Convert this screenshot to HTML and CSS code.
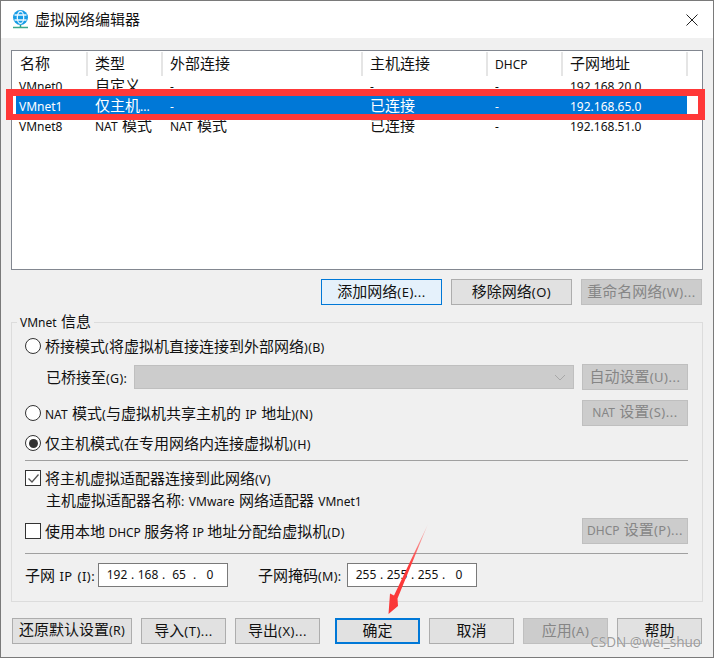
FILE: index.html
```html
<!DOCTYPE html>
<html lang="zh-CN">
<head>
<meta charset="utf-8">
<title>虚拟网络编辑器</title>
<link rel="stylesheet" href="styles.css">
</head>
<body>
<div class="dialog">
  <header class="titlebar">
    <svg class="app-icon" width="18" height="20" viewBox="0 0 18 20">
      <circle cx="8.500" cy="7.500" r="7.500" fill="#169ce6"/>
      <ellipse cx="8.500" cy="7.500" rx="3.200" ry="6" fill="none" stroke="#e8f6ff" stroke-width="1.300"/>
      <path d="M2.500 5h12M2.500 10h12" stroke="#e8f6ff" stroke-width="1.300"/>
      <path d="M8.500 15v2" stroke="#2aa07a" stroke-width="1.500"/>
      <path d="M1 17.500h15" stroke="#3aa88a" stroke-width="1.500"/>
    </svg>
    <span class="title">虚拟网络编辑器</span>
    <svg class="close" width="12" height="12" viewBox="0 0 12 12">
      <path d="M.5.5l11 11M11.500.5l-11 11" stroke="#222" stroke-width="1" fill="none"/>
    </svg>
  </header>

  <main class="client">
    <section class="list">
      <div class="list-head">
        <div class="th">名称</div>
        <div class="th">类型</div>
        <div class="th">外部连接</div>
        <div class="th">主机连接</div>
        <div class="th"><span class="e">DHCP</span></div>
        <div class="th">子网地址</div>
      </div>
      <div class="row">
        <div class="td"><span class="e">VMnet0</span></div>
        <div class="td">自定义</div>
        <div class="td"><span class="e">-</span></div>
        <div class="td"><span class="e">-</span></div>
        <div class="td"><span class="e">-</span></div>
        <div class="td"><span class="e">192.168.20.0</span></div>
      </div>
      <div class="row selected">
        <div class="td"><span class="e">VMnet1</span></div>
        <div class="td">仅主机<span class="e">...</span></div>
        <div class="td"><span class="e">-</span></div>
        <div class="td">已连接</div>
        <div class="td"><span class="e">-</span></div>
        <div class="td"><span class="e">192.168.65.0</span></div>
      </div>
      <div class="row">
        <div class="td"><span class="e">VMnet8</span></div>
        <div class="td"><span class="e">NAT</span> 模式</div>
        <div class="td"><span class="e">NAT</span> 模式</div>
        <div class="td">已连接</div>
        <div class="td"><span class="e">-</span></div>
        <div class="td"><span class="e">192.168.51.0</span></div>
      </div>
    </section>

    <div class="list-actions">
      <button class="btn wide focus">添加网络<span class="e d">(E)...</span></button>
      <button class="btn wide">移除网络<span class="e d">(O)</span></button>
      <button class="btn wide disabled">重命名网络<span class="e d">(W)...</span></button>
    </div>

    <section class="group">
      <div class="legend"><span class="e">VMnet</span> 信息</div>

      <div class="line first">
        <span class="radio"></span>
        <span class="lbl">桥接模式<span class="e p">(</span>将虚拟机直接连接到外部网络<span class="e p">)(B)</span></span>
      </div>
      <div class="line bridge">
        <span class="bridge-label lbl">已桥接至<span class="e p">(G):</span></span>
        <div class="select">
          <svg width="12" height="7" viewBox="0 0 12 7"><path d="M1 1l5 5 5-5" fill="none" stroke="#a8a8a8" stroke-width="1"/></svg>
        </div>
        <button class="btn side disabled">自动设置<span class="e d">(U)...</span></button>
      </div>
      <div class="line spread nat">
        <span class="opt">
          <span class="radio"></span>
          <span class="lbl"><span class="e">NAT</span> 模式<span class="e p">(</span>与虚拟机共享主机的 <span class="e">IP</span> 地址<span class="e p">)(N)</span></span>
        </span>
        <button class="btn side disabled"><span class="e">NAT</span> 设置<span class="e d">(S)...</span></button>
      </div>
      <div class="line host">
        <span class="radio checked"></span>
        <span class="lbl">仅主机模式<span class="e p">(</span>在专用网络内连接虚拟机<span class="e p">)(H)</span></span>
      </div>

      <div class="sep sep-a"></div>

      <div class="line check-line">
        <span class="check">
          <svg width="13" height="11" viewBox="0 0 13 11"><path d="M1.500 5.500l3.500 3.500 6.500-7.500" fill="none" stroke="#555" stroke-width="1.300"/></svg>
        </span>
        <span class="lbl">将主机虚拟适配器连接到此网络<span class="e p">(V)</span></span>
      </div>
      <div class="adapter">主机虚拟适配器名称<span class="e p">:</span><span class="e"> VMware</span> 网络适配器 <span class="e">VMnet1</span></div>
      <div class="line spread dhcp">
        <span class="opt">
          <span class="check"></span>
          <span class="lbl tight">使用本地 <span class="e">DHCP</span> 服务将 <span class="e">IP</span> 地址分配给虚拟机<span class="e p">(D)</span></span>
        </span>
        <button class="btn side disabled"><span class="e">DHCP</span> 设置<span class="e d">(P)...</span></button>
      </div>

      <div class="sep sep-b"></div>

      <div class="ip-line">
        <span class="ip-label lbl">子网 <span class="e d">IP (I):</span></span>
        <div class="ip">
          <span>192</span><span>.</span><span>168</span><span>.</span><span>65</span><span>.</span><span>0</span>
        </div>
        <span class="mask-label lbl">子网掩码<span class="e p">(M):</span></span>
        <div class="ip">
          <span>255</span><span>.</span><span>255</span><span>.</span><span>255</span><span>.</span><span>0</span>
        </div>
      </div>
    </section>

    <footer class="footer">
      <button class="btn wide-l">还原默认设置<span class="e p">(R)</span></button>
      <button class="btn foot">导入<span class="e d">(T)...</span></button>
      <button class="btn foot">导出<span class="e d">(X)...</span></button>
      <button class="btn foot default">确定</button>
      <button class="btn foot">取消</button>
      <button class="btn foot disabled">应用<span class="e d">(A)</span></button>
      <button class="btn foot">帮助</button>
    </footer>
  </main>

  <div class="mark-box"></div>
  <svg class="arrow" width="714" height="658" viewBox="0 0 714 658">
    <defs>
      <linearGradient id="fade" x1="428" y1="524" x2="389" y2="614" gradientUnits="userSpaceOnUse">
        <stop offset="0" stop-color="#ff3b3b" stop-opacity=".15"/>
        <stop offset=".45" stop-color="#ff3b3b"/>
        <stop offset="1" stop-color="#f93838"/>
      </linearGradient>
    </defs>
    <path d="M428 524L397.500 598.500 398 606 388.500 614 390 593.500 394 595.500Z" fill="url(#fade)"/>
  </svg>
  <div class="watermark">CSDN @wei_shuo</div>
</div>
</body>
</html>
```
FILE: styles.css
```css
* { box-sizing: border-box; }

html, body {
  margin: 0;
  padding: 0;
  background: #f0f0f0;
}

body {
  font-family: "Noto Sans CJK SC", "Noto Sans", sans-serif;
  font-size: 15px;
  color: #111;
  word-spacing: 1px;
}

.e {
  font-family: "Noto Sans", "Liberation Sans", sans-serif;
  font-size: 12px;
}

.p { font-size: 12.500px; letter-spacing: 0.3px; }
.d { font-size: 13px; letter-spacing: 0.5px; }

.dialog {
  position: relative;
  width: 714px;
  height: 658px;
  border: 1px solid #7a7a7a;
  overflow: hidden;
  background: #f0f0f0;
}

.titlebar {
  display: flex;
  align-items: center;
  height: 37px;
  padding: 0 15px 0 11px;
  background: #fff;
}

.app-icon { flex: none; margin-right: 5px; }
.title { flex: 1; line-height: 20px; padding-bottom: 2px; }
.close { flex: none; }

.client { padding: 12px 10px 0 10px; }

.list {
  width: 692px;
  height: 220px;
  border: 1px solid #828790;
  background: #fff;
}

.list-head {
  display: grid;
  grid-template-columns: 76px 75px 200px 125px 75px 125px 14px;
  height: 25px;
  padding-top: 1px;
}

.row {
  display: grid;
  grid-template-columns: 75px 75px 200px 125px 75px 125px 15px;
  height: 20px;
  line-height: 18px;
}

.th {
  padding-left: 7px;
  border-right: 2px solid #e5e5e5;
  line-height: 22px;
  white-space: nowrap;
}

.th:first-child { padding-left: 8px; }

.row .td:first-child { padding-left: 7px; }
.td { padding-left: 8px; white-space: nowrap; }

.selected {
  background: linear-gradient(#0078d7, #0078d7) 4px 0 / 671px 100% no-repeat;
  color: #fff;
}

.list-actions {
  display: flex;
  justify-content: flex-end;
  gap: 9px;
  width: 691px;
  margin-top: 9px;
}

.btn {
  display: block;
  flex: none;
  height: 26px;
  padding: 0 0 2px;
  border: 1px solid #adadad;
  background: #e1e1e1;
  font-family: inherit;
  font-size: 15px;
  line-height: 20px;
  color: #111;
  white-space: nowrap;
  word-spacing: 1px;
}

.btn.wide { width: 121px; }
.btn.side { width: 106px; }
.btn.wide-l { width: 120px; }
.btn.foot { width: 85px; }
.btn.focus { background: #e5f1fb; border-color: #0078d7; }
.btn.default { border: 2px solid #0078d7; margin-left: 6px; }
.btn.disabled { background: #cccccc; border-color: #bfbfbf; color: #868686; }

.group {
  position: relative;
  width: 692px;
  height: 280px;
  margin-top: 17px;
  padding: 0 14px 0 13px;
  border: 1px solid #dcdcdc;
}

.legend {
  position: absolute;
  left: 5px;
  top: -12px;
  padding: 0 3px;
  background: #f0f0f0;
  line-height: 20px;
}

.line {
  display: flex;
  align-items: center;
  height: 24px;
  white-space: nowrap;
}

.lbl { padding-bottom: 2px; }
.tight { word-spacing: 0; }

.line.first { margin-top: 11px; }
.line.bridge { height: 26px; margin-top: 6px; padding-left: 21px; }
.line.spread { justify-content: space-between; height: 26px; }
.line.nat { margin-top: 10px; }
.line.host { margin-top: 5px; }
.line.check-line { margin-top: 5px; }
.line.dhcp { margin-top: 6px; }

.opt { display: flex; align-items: center; }

.radio {
  flex: none;
  position: relative;
  width: 16px;
  height: 16px;
  margin-right: 4px;
  border: 1px solid #333;
  border-radius: 50%;
  background: #fff;
}

.radio.checked::after {
  content: "";
  position: absolute;
  left: 2.500px;
  top: 2.500px;
  width: 9px;
  height: 9px;
  border-radius: 50%;
  background: #333;
}

.check {
  flex: none;
  display: flex;
  align-items: center;
  justify-content: center;
  width: 16px;
  height: 16px;
  margin-right: 4px;
  border: 1px solid #333;
  background: #fff;
}

.bridge-label { width: 88px; flex: none; }

.select {
  flex: none;
  display: flex;
  align-items: center;
  justify-content: flex-end;
  width: 440px;
  height: 24px;
  margin-right: 8px;
  padding-right: 7px;
  border: 1px solid #bfbfbf;
  background: #cccccc;
}

.sep { height: 1px; background: #a0a0a0; }
.sep-a { margin-top: 5px; }
.sep-b { margin-top: 9px; }

.adapter {
  height: 22px;
  padding-left: 21px;
  line-height: 19px;
  white-space: nowrap;
}

.ip-line {
  display: flex;
  align-items: center;
  height: 24px;
  margin-top: 9px;
  white-space: nowrap;
}

.ip-label { width: 73px; flex: none; }
.mask-label { width: 89px; flex: none; margin-left: 30px; }

.ip {
  flex: none;
  display: grid;
  grid-template-columns: 26px 5px 26px 5px 26px 5px 26px;
  align-items: center;
  width: 130px;
  height: 24px;
  padding: 0 0 2px 5px;
  border: 1px solid #7a7a7a;
  background: #fff;
  font-family: "Noto Sans", sans-serif;
  font-size: 12px;
  text-align: center;
}

.footer {
  display: flex;
  gap: 9px;
  margin-top: 16px;
  padding-left: 1px;
}

.mark-box {
  position: absolute;
  left: 5px;
  top: 88px;
  width: 699px;
  height: 31px;
  border: solid #ff3838;
  border-width: 7px 7px 6px 7px;
}

.arrow {
  position: absolute;
  left: -1px;
  top: -1px;
  pointer-events: none;
}

.watermark {
  position: absolute;
  right: 12px;
  bottom: 5px;
  font-family: "Noto Sans", sans-serif;
  font-size: 13.500px;
  line-height: 20px;
  color: rgba(120, 120, 120, 0.72);
  text-shadow: 0 0 1px rgba(255, 255, 255, 0.8);
  word-spacing: 0;
  white-space: nowrap;
}
```
